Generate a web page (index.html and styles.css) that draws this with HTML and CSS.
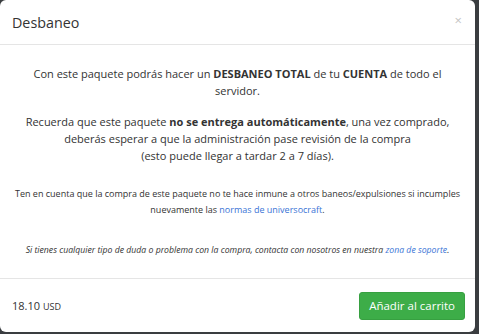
FILE: index.html
```html
<!DOCTYPE html>
<html lang="es">
<head>
    <meta charset="UTF-8">
    <title>Desbaneo</title>
    <link rel="stylesheet" href="styles.css">
</head>
<body>
    <div class="modal">
        <div class="modal-header">
            <h4 class="modal-title">Desbaneo</h4>
            <span class="close">&times;</span>
        </div>
        <div class="modal-body">
            <p class="lead first">Con este paquete podrás hacer un <b>DESBANEO TOTAL</b> de tu <b>CUENTA</b> de todo el servidor.</p>
            <p class="lead">Recuerda que este paquete <b>no se entrega automáticamente</b>, una vez comprado,<br>
                deberás esperar a que la administración pase revisión de la compra<br>
                (esto puede llegar a tardar 2 a 7 días).</p>
            <p class="small">Ten en cuenta que la compra de este paquete no te hace inmune a otros baneos/expulsiones si incumples nuevamente las <a href="#">normas de universocraft</a>.</p>
            <p class="small note">Si tienes cualquier tipo de duda o problema con la compra, contacta con nosotros en nuestra <a href="#">zona de soporte</a>.</p>
        </div>
        <div class="modal-footer">
            <span class="price">18.10 <small>USD</small></span>
            <button class="btn-success">Añadir al carrito</button>
        </div>
    </div>
</body>
</html>
```

FILE: styles.css
```css
body {
    margin: 0;
    background-color: #3a3d40;
    font-family: "Open Sans", Arial, sans-serif;
    color: #333;
}

.modal {
    width: 475px;
    height: 332px;
    background-color: #fff;
    border-radius: 6px;
    display: flex;
    flex-direction: column;
    overflow: hidden;
}

.modal-header {
    flex-shrink: 0;
    height: 44px;
    padding: 0 12px;
    border-bottom: 1px solid #e5e5e5;
    display: flex;
    align-items: center;
    justify-content: space-between;
}

.modal-title {
    margin: 0;
    font-size: 14.3px;
    font-weight: normal;
    color: #333;
}

.close {
    font-size: 13px;
    color: #c4c4c4;
    margin-top: -5px;
    margin-right: 1px;
}

.modal-body {
    flex: 1;
    padding: 20px 10px 0;
    text-align: center;
}

.modal-body p {
    margin: 0;
}

.lead {
    font-size: 11px;
    line-height: 17px;
    margin-top: 14px !important;
}

.lead.first {
    margin-top: 0 !important;
}

.small {
    font-size: 9px;
    line-height: 16px;
    margin-top: 22px !important;
}

.note {
    font-style: italic;
    font-size: 8.7px;
    margin-top: 24px !important;
}

a {
    color: #3a74d6;
    text-decoration: none;
}

.modal-footer {
    flex-shrink: 0;
    height: 53px;
    padding: 0 10px 0 12px;
    border-top: 1px solid #e5e5e5;
    display: flex;
    align-items: center;
    justify-content: space-between;
}

.price {
    font-size: 11px;
}

.price small {
    font-size: 9px;
}

.btn-success {
    height: 28px;
    padding: 0 9px;
    background-color: #3dad48;
    border: 1px solid #37a041;
    border-radius: 3px;
    color: #fff;
    font-family: "Open Sans", Arial, sans-serif;
    font-size: 11.5px;
}
```
